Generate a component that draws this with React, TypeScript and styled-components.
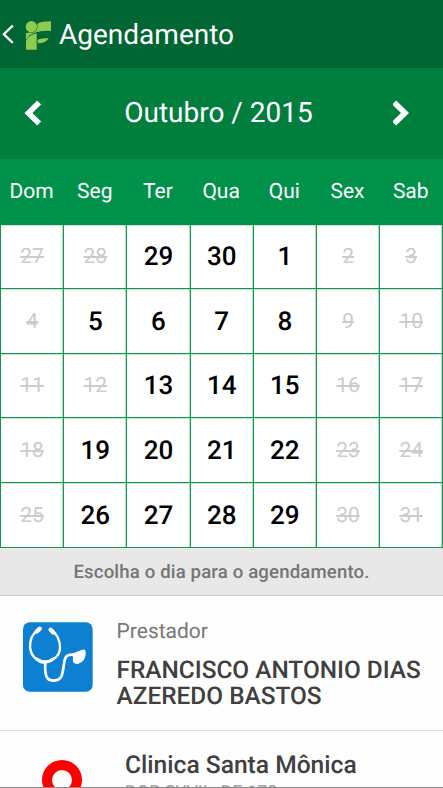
import React from "react";
import styled, { createGlobalStyle } from "styled-components";

const Global = createGlobalStyle`
  * { box-sizing: border-box; }
  html, body { margin: 0; padding: 0; background: #fff; overflow: hidden; }
  body { font-family: Roboto, "Noto Sans", sans-serif; text-rendering: geometricPrecision; }
`;

const Screen = styled.div`
  width: 443px;
  height: 788px;
  overflow: hidden;
  display: flex;
  flex-direction: column;
  background: #fefefe;
  border-bottom: 1px solid #8a8a8a;
`;

const Header = styled.header`
  flex: 0 0 68px;
  display: flex;
  align-items: center;
  padding: 2px 0 0 2px;
  background: #006633;
  color: #fff;
`;

const BackIcon = styled.svg`
  width: 12px;
  height: 20px;
  margin: 0 11px 2px 0;
  flex: none;
`;

const Logo = styled.svg`
  width: 27px;
  height: 30px;
  margin: 0 8px 1px 0;
  flex: none;
`;

const Title = styled.h1`
  margin: 0 0 0 -1px;
  font-size: 28px;
  line-height: 34px;
  font-weight: 400;
`;

const MonthBar = styled.div`
  flex: 0 0 91px;
  display: flex;
  align-items: center;
  justify-content: space-between;
  padding: 0 32px 2px 24px;
  background: #007e3e;
  color: #fff;
`;

const MonthName = styled.div`
  font-size: 28px;
  line-height: 34px;
  padding-left: 2px;
`;

const Arrow = styled.button`
  display: flex;
  border: 0;
  padding: 0;
  background: none;
  svg { width: 18px; height: 26px; display: block; }
`;

const Weekdays = styled.div`
  flex: 0 0 65px;
  display: grid;
  grid-template-columns: repeat(7, 63.2px);
  align-items: center;
  padding-top: 1px;
  background: #00914a;
  color: #fff;
  font-size: 21px;
  line-height: 24px;
  text-align: center;
`;

const Calendar = styled.div`
  flex: 0 0 324px;
  display: grid;
  grid-template-columns: repeat(7, 63.2px);
  grid-template-rows: 63.9px repeat(4, 64.7px);
  border-top: 1px solid #00914a;
  border-left: 1px solid #12984f;
  width: 443px;
`;

const Day = styled.div<{ $open: boolean }>`
  display: flex;
  align-items: center;
  justify-content: center;
  padding-top: 1.6px;
  border-right: 1px solid #12984f;
  border-bottom: 1px solid #12984f;
  box-shadow: inset -1px 0 0 #b5dfc9, inset 0 1px 0 #c9e8d8;
  background: #fff;
  font-size: ${(p) => (p.$open ? "26px" : "21px")};
  font-weight: ${(p) => (p.$open ? 500 : 400)};
  color: ${(p) => (p.$open ? "#000" : "#ccc")};
  text-decoration: ${(p) => (p.$open ? "none" : "line-through")};
`;

const Hint = styled.div`
  flex: 0 0 48px;
  display: flex;
  align-items: center;
  justify-content: center;
  background: #e8e8e8;
  border-bottom: 1px solid #c8c8c8;
  color: #757575;
  font-size: 18.6px;
  font-weight: 500;
  letter-spacing: 0.15px;
`;

const Row = styled.section<{ $height: number; $indent: number }>`
  flex: 0 0 ${(p) => p.$height}px;
  display: flex;
  align-items: flex-start;
  padding-left: ${(p) => p.$indent}px;
  border-bottom: 1px solid #e0e0e0;
  overflow: hidden;
`;

const ProviderIcon = styled.svg`
  width: 70px;
  height: 70px;
  margin: 25.6px 23.4px 0 0;
  flex: none;
`;

const PinIcon = styled.svg`
  width: 40px;
  height: 56px;
  margin: 29px 43px 0 0;
  flex: none;
`;

const Label = styled.div`
  margin-top: 24px;
  font-size: 21px;
  line-height: 24px;
  color: #777;
`;

const Name = styled.div`
  margin-top: 13px;
  font-size: 24.4px;
  line-height: 26px;
  font-weight: 500;
  color: #404040;
  white-space: nowrap;
`;

const Clinic = styled.div`
  margin-top: 20px;
  font-size: 24.6px;
  line-height: 30px;
  font-weight: 500;
  color: #404040;
  white-space: nowrap;
`;

const Address = styled.div`
  margin-top: 1px;
  font-size: 18px;
  line-height: 22px;
  color: #999;
`;

const weekdays = ["Dom", "Seg", "Ter", "Qua", "Qui", "Sex", "Sab"];
const days = [
  27, 28, 29, 30, 1, 2, 3, 4, 5, 6, 7, 8, 9, 10, 11, 12, 13, 14, 15, 16, 17, 18,
  19, 20, 21, 22, 23, 24, 25, 26, 27, 28, 29, 30, 31,
];
const openCells = new Set([
  2, 3, 4, 8, 9, 10, 11, 16, 17, 18, 22, 23, 24, 25, 29, 30, 31, 32,
]);

export default function App() {
  return (
    <>
      <Global />
      <Screen>
        <Header>
          <BackIcon viewBox="0 0 12 20" fill="none" stroke="#fff" strokeWidth="2.3">
            <path d="M10.8 1.6 1.8 10.2 10.8 18.8" />
          </BackIcon>
          <Logo viewBox="75 58 81 90" fill="#8fcb50">
            <circle cx="94" cy="78" r="17" />
            <path d="M112 69 Q126 62 153 62 V91 Q126 89 108 95 Q99 98 88 106 Q98 95 109 90 Q115 80 112 69Z" />
            <path d="M78 98 Q86 95 98 96 Q84 105 78 118Z" />
            <path d="M78 121 Q84 105 110 98 V147 H78Z" />
            <path d="M113 117 Q125 112 146 112 Q139 128 113 128Z" />
          </Logo>
          <Title>Agendamento</Title>
        </Header>
        <MonthBar>
          <Arrow aria-label="Mês anterior">
            <svg viewBox="0 0 18 26" fill="none" stroke="#fff" strokeWidth="5.6">
              <path d="M15.2 2.4 4.4 13 15.2 23.6" />
            </svg>
          </Arrow>
          <MonthName>Outubro / 2015</MonthName>
          <Arrow aria-label="Próximo mês">
            <svg viewBox="0 0 18 26" fill="none" stroke="#fff" strokeWidth="5.6">
              <path d="M1.2 2.4 12 13 1.2 23.6" />
            </svg>
          </Arrow>
        </MonthBar>
        <Weekdays>
          {weekdays.map((d) => (
            <span key={d}>{d}</span>
          ))}
        </Weekdays>
        <Calendar>
          {days.map((d, i) => (
            <Day key={i} $open={openCells.has(i)}>
              {d}
            </Day>
          ))}
        </Calendar>
        <Hint>Escolha o dia para o agendamento.</Hint>
        <Row $height={135} $indent={23.2}>
          <ProviderIcon viewBox="71 95 208 208">
            <rect x="71" y="96" width="207" height="206" rx="20" fill="#0d80d2" />
            <g fill="none" stroke="#fff" strokeLinecap="round" strokeLinejoin="round">
              <path d="M117 117 C98 130 91 151 92 171 C95 195 111 210 134 213 C162 212 180 196 181 172 C181 151 171 130 156 119" strokeWidth="7" />
              <path d="M121 115 L112 123 M153 118 L161 126" strokeWidth="13" />
              <path d="M112 205 Q126 217 136 214 Q149 215 162 204" strokeWidth="9" />
              <path d="M137 214 C136 250 138 268 160 269 C190 269 188 248 193 218 C196 196 203 191 220 192" strokeWidth="8" />
            </g>
            <path d="M217 190 C232 184 243 177 253 177 C260 180 258 197 252 207 C243 219 228 223 222 216 C217 210 222 200 217 190Z" fill="#fff" />
          </ProviderIcon>
          <div>
            <Label>Prestador</Label>
            <Name>
              FRANCISCO ANTONIO DIAS
              <br />
              AZEREDO BASTOS
            </Name>
          </div>
        </Row>
        <Row $height={100} $indent={42}>
          <PinIcon viewBox="0 0 40 56">
            <path fillRule="evenodd" fill="#f00" d="M20 0 A20 20 0 0 1 40 20 C40 34 20 56 20 56 C20 56 0 34 0 20 A20 20 0 0 1 20 0Z M20 10 A10 10 0 1 0 20 30 A10 10 0 1 0 20 10Z" />
          </PinIcon>
          <div>
            <Clinic>Clinica Santa Mônica</Clinic>
            <Address>DOR SYVIL, DE 170</Address>
          </div>
        </Row>
      </Screen>
    </>
  );
}
